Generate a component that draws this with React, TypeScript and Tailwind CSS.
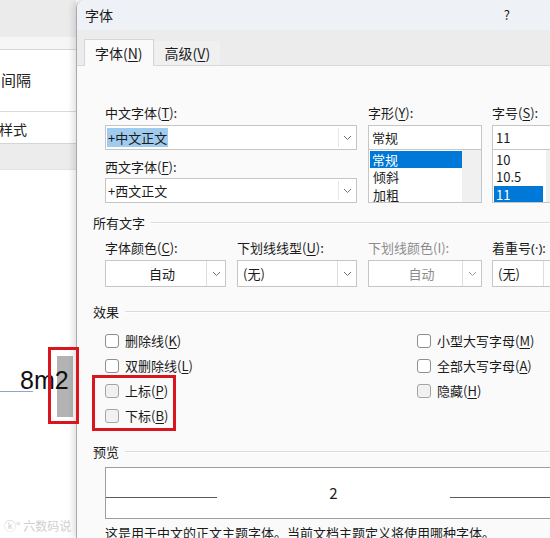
import React from "react";

const F = '"Noto Sans CJK SC", "Noto Sans", sans-serif';
const LAT = '"Noto Sans", "Liberation Sans", sans-serif';

function U({ c }: { c: string }) {
  return <span className="underline underline-offset-[2px] decoration-1">{c}</span>;
}

function Chevron({ gray }: { gray?: boolean }) {
  return (
    <svg width="9" height="6" viewBox="0 0 9 6" fill="none" stroke={gray ? "#a0a0a0" : "#707070"} strokeWidth="1">
      <path d="M1 1l3.5 3.5L8 1" />
    </svg>
  );
}

function Label({ children, gray }: { children: React.ReactNode; gray?: boolean }) {
  return (
    <div className={`h-[18px] leading-[18px] text-[13px] whitespace-nowrap ${gray ? "text-[#8c8c8c]" : "text-[#1b1b1b]"}`}>
      {children}
    </div>
  );
}

function Combo({ children }: { children: React.ReactNode }) {
  return (
    <div className="h-[25px] border border-[#c6c6c6] bg-white flex">
      <div className="flex-1 flex items-center pl-[1px] text-[13px] text-[#1b1b1b]">{children}</div>
      <div className="w-[17px] my-[2px] mr-[1px] border-l border-[#e6e6e6] flex items-center justify-center">
        <Chevron />
      </div>
    </div>
  );
}

function Drop({ children, center, gray }: { children: React.ReactNode; center?: boolean; gray?: boolean }) {
  return (
    <div className="h-[27px] border border-[#c6c6c6] bg-white flex">
      <div
        className={`flex-1 flex items-center text-[13px] ${center ? "justify-center" : "pl-[5px]"} ${
          gray ? "text-[#8c8c8c]" : "text-[#1b1b1b]"
        }`}
      >
        {children}
      </div>
      <div className="w-[19px] border-l border-[#dedede] flex items-center justify-center">
        <Chevron gray={gray} />
      </div>
    </div>
  );
}

function Section({ children }: { children: React.ReactNode }) {
  return (
    <div className="flex items-center h-[18px] pl-[16px] gap-[6px]">
      <span className="text-[13px] leading-[18px] text-[#1b1b1b] whitespace-nowrap">{children}</span>
      <div className="flex-1 border-t border-[#dcdcdc] border-b-white border-b" />
    </div>
  );
}

function Check({ children, light }: { children: React.ReactNode; light?: boolean }) {
  return (
    <div className="h-[25px] flex items-center gap-[6px]">
      <div
        className={`w-[14px] h-[14px] border rounded-[3px] ${light ? "bg-[#f1f1f1] border-[#a4a4a4]" : "bg-white border-[#8e8e8e]"}`}
      />
      <span className="text-[13px] leading-[18px] text-[#1b1b1b] whitespace-nowrap">{children}</span>
    </div>
  );
}

export default function App() {
  return (
    <div className="relative w-[550px] h-[538px] overflow-hidden flex bg-white" style={{ fontFamily: F }}>
      {/* Left: document behind */}
      <div className="relative w-[76px] shrink-0 flex flex-col bg-white overflow-hidden">
        <div className="h-[37px] shrink-0 bg-[#ebebeb]" />
        <div className="h-[13px] shrink-0 bg-[#f6f6f6] border-b border-[#d6d6d6]" />
        <div className="h-[62px] shrink-0 flex items-center text-[15px] text-[#222] border-b border-[#dadada] pl-[1px]">间隔</div>
        <div className="h-[32px] shrink-0 flex items-center text-[14px] text-[#222] -ml-[1px] pt-[4px] border-b border-[#d4d4d4]">样式</div>
        <div className="h-[26px] shrink-0 bg-[#ececec] border-b border-[#e4e4e4]" />
        <div className="relative shrink-0 mt-[196px] h-[28px] flex" style={{ fontFamily: '"Liberation Sans", Arial, sans-serif' }}>
          <div className="absolute left-0 top-[25px] w-[33px] border-t border-[#8fa6c6]" />
          <div className="absolute left-[57px] -top-[10px] w-[16px] h-[61px] bg-[#b3b3b3]" />
          <span className="relative ml-[20px] text-[25px] leading-[28px] text-[#111]">8m2</span>
        </div>
        <div className="mt-auto mb-[3px] ml-[4px] text-[12px] text-[#cfcfcf] whitespace-nowrap">ⓚ° 六数码说</div>
      </div>

      {/* Dialog */}
      <div className="relative w-[500px] shrink-0 flex flex-col border-l border-[#a9a9a9] rounded-tl-[8px] overflow-hidden shadow-[-3px_0_6px_rgba(0,0,0,0.12)] bg-[#fafafa]">
        <div className="h-[30px] shrink-0 bg-[#eef1f5] flex items-center justify-between pl-[8px] pr-[66px] text-[14px] text-[#1b1b1b]">
          <span>字体</span>
          <span className="text-[13px]">?</span>
        </div>
        <div className="h-[36px] shrink-0 bg-[#ececec] flex items-end pl-[7px] border-b border-[#d9d9d9]">
          <div className="h-[27px] -mb-px px-[10px] bg-[#fafafa] border border-b-0 border-[#d6d6d6] flex items-center text-[14px] text-[#1b1b1b]">
            字体(<U c="N" />)
          </div>
          <div className="h-[24px] ml-[1px] px-[10px] bg-[#f0f0f0] flex items-center text-[14px] text-[#1b1b1b]">
            高级(<U c="V" />)
          </div>
        </div>

        <div className="shrink-0 flex flex-col pt-[38px]">
          {/* top grid */}
          <div className="pl-[28px] grid grid-cols-[252px_114px_70px] gap-x-[11px]">
            <div className="flex flex-col">
              <Label>
                中文字体(<U c="T" />):
              </Label>
              <div className="mt-[3px]">
                <Combo>
                  <span className="bg-[#9fcbef] leading-[19px] px-[1px]">+中文正文</span>
                </Combo>
              </div>
              <div className="mt-[8px]">
                <Label>
                  西文字体(<U c="F" />):
                </Label>
              </div>
              <div className="mt-[2px]">
                <Combo>
                  <span className="px-[1px]">+西文正文</span>
                </Combo>
              </div>
            </div>
            <div className="flex flex-col">
              <Label>
                字形(<U c="Y" />):
              </Label>
              <div className="mt-[3px] h-[25px] border border-[#c6c6c6] bg-white flex items-center pl-[3px] text-[13px] text-[#1b1b1b]">
                常规
              </div>
              <div className="h-[53px] border border-t-0 border-[#c6c6c6] bg-white flex overflow-hidden">
                <div className="flex-1 pl-[1px] text-[13px]">
                  <div className="h-[17px] mt-px bg-[#0078d7] text-white leading-[17px] pl-[2px]">常规</div>
                  <div className="h-[18px] leading-[18px] pl-[3px] text-[#1b1b1b]">倾斜</div>
                  <div className="h-[17px] leading-[17px] pl-[3px] text-[#1b1b1b]">加粗</div>
                </div>
                <div className="w-[19px] bg-[#f0f0f0]" />
              </div>
            </div>
            <div className="flex flex-col -ml-px">
              <Label>
                字号(<U c="S" />):
              </Label>
              <div className="mt-[3px] h-[25px] border border-[#c6c6c6] bg-white flex items-center pl-[3px] text-[13px] text-[#1b1b1b]">
                11
              </div>
              <div className="h-[53px] border border-t-0 border-[#c6c6c6] bg-white flex overflow-hidden">
                <div className="w-[49px] ml-[1px] text-[13px]">
                  <div className="h-[17px] mt-px leading-[17px] pl-[2px] text-[#1b1b1b]">10</div>
                  <div className="h-[18px] leading-[18px] pl-[2px] text-[#1b1b1b]">10.5</div>
                  <div className="h-[17px] bg-[#0078d7] text-white leading-[17px] pl-[2px]">11</div>
                </div>
                <div className="flex-1 ml-[3px] bg-[#f0f0f0]" />
              </div>
            </div>
          </div>

          <div className="mt-[11px]">
            <Section>所有文字</Section>
          </div>

          <div className="mt-[7px] pl-[28px] grid grid-cols-[121px_120px_114px_70px] gap-x-[11px]">
            <Label>
              字体颜色(<U c="C" />):
            </Label>
            <Label>
              下划线线型(<U c="U" />):
            </Label>
            <Label gray>下划线颜色(I):</Label>
            <div className="-ml-px">
              <Label>
                着重号<span style={{ fontFamily: LAT }}>(·):</span>
              </Label>
            </div>
          </div>
          <div className="mt-[3px] pl-[28px] grid grid-cols-[121px_120px_114px_70px] gap-x-[11px]">
            <Drop center>
              <span className="pl-[12px]">自动</span>
            </Drop>
            <Drop>(无)</Drop>
            <Drop center gray>
              <span className="pl-[12px]">自动</span>
            </Drop>
            <div className="-ml-px">
              <Drop>(无)</Drop>
            </div>
          </div>

          <div className="mt-[16px]">
            <Section>效果</Section>
          </div>

          <div className="mt-[7px] pl-[28px] grid grid-cols-[312px_1fr]">
            <div className="flex flex-col">
              <Check>
                删除线(<U c="K" />)
              </Check>
              <Check>
                双删除线(<U c="L" />)
              </Check>
              <Check light>
                上标(<U c="P" />)
              </Check>
              <Check light>
                下标(<U c="B" />)
              </Check>
            </div>
            <div className="flex flex-col">
              <Check>
                小型大写字母(<U c="M" />)
              </Check>
              <Check>
                全部大写字母(<U c="A" />)
              </Check>
              <Check light>
                隐藏(<U c="H" />)
              </Check>
            </div>
          </div>

          <div className="mt-[15px]">
            <Section>预览</Section>
          </div>

          <div className="mt-[6px] ml-[28px] h-[52px] border border-[#9e9e9e] border-r-0 bg-white flex items-start">
            <div className="w-[111px] h-[30px] border-b border-[#5a5a5a]" />
            <div className="w-[233px] pt-[16px] text-center text-[15px] leading-[18px] text-[#222]">2</div>
            <div className="flex-1 h-[30px] border-b border-[#5a5a5a]" />
          </div>

          <div className="mt-[5px] pl-[28px] text-[13px] leading-[18px] text-[#1b1b1b] whitespace-nowrap">
            这是用于中文的正文主题字体。当前文档主题定义将使用哪种字体。
          </div>
        </div>

        {/* red highlight box around 上标/下标 */}
        <div className="absolute left-[15px] top-[375px] w-[84px] h-[56px] border-[3px] border-[#d9161e]" />
      </div>

      {/* red highlight box around the "2" */}
      <div className="absolute left-[48px] top-[347px] w-[31px] h-[77px] border-[3px] border-[#d9161e]" />
    </div>
  );
}
